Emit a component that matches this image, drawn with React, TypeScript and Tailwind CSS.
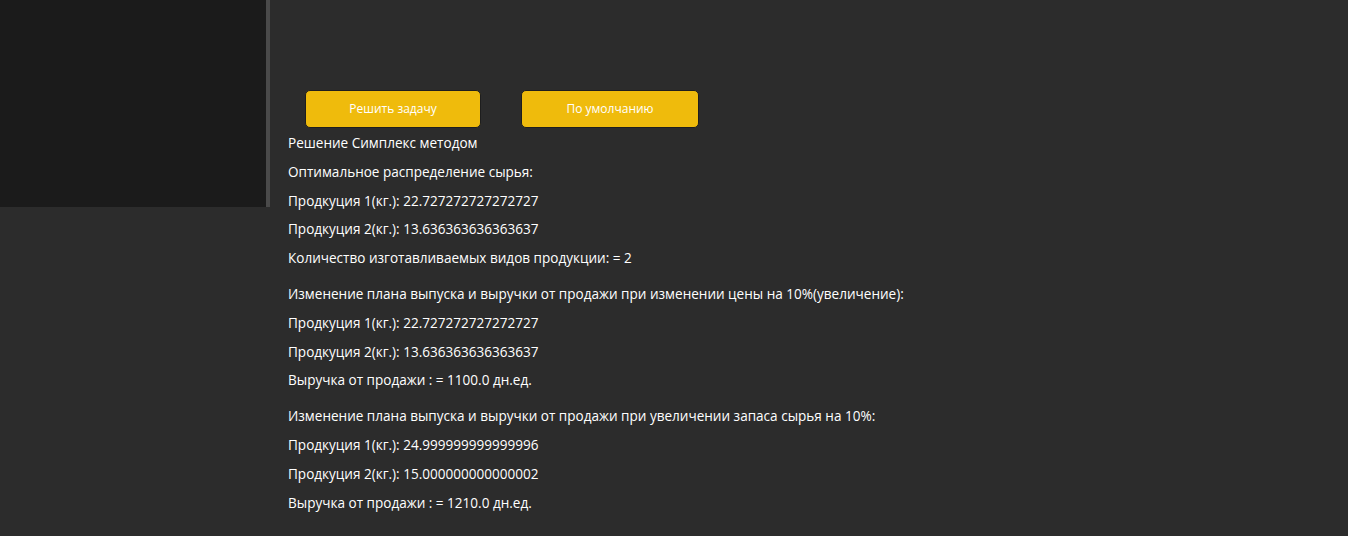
export default function App() {
  const lines1 = [
    "Решение Симплекс методом",
    "Оптимальное распределение сырья:",
    "Продкуция 1(кг.): 22.727272727272727",
    "Продкуция 2(кг.): 13.636363636363637",
    "Количество изготавливаемых видов продукции: = 2",
  ];
  const lines2 = [
    "Изменение плана выпуска и выручки от продажи при изменении цены на 10%(увеличение):",
    "Продкуция 1(кг.): 22.727272727272727",
    "Продкуция 2(кг.): 13.636363636363637",
    "Выручка от продажи : = 1100.0 дн.ед.",
  ];
  const lines3 = [
    "Изменение плана выпуска и выручки от продажи при увеличении запаса сырья на 10%:",
    "Продкуция 1(кг.): 24.999999999999996",
    "Продкуция 2(кг.): 15.000000000000002",
    "Выручка от продажи : = 1210.0 дн.ед.",
  ];

  return (
    <div className="flex min-h-[536px] w-full bg-[#2c2c2c] font-['Open_Sans',sans-serif] text-[13.55px] text-white">
      <div className="flex h-[207px] shrink-0">
        <div className="w-[266px] bg-[#1b1b1b]" />
        <div className="w-[4px] bg-[#4a4a4a]" />
      </div>

      <div className="flex flex-col pl-[18px] pt-[90px]">
        <div className="flex gap-[40px] pl-[17px]">
          <button className="h-[38px] w-[176px] rounded-[5px] border border-[#1e1e1e] bg-[#efbb0c] text-[12px] text-white">
            Решить задачу
          </button>
          <button className="h-[38px] w-[178px] rounded-[5px] border border-[#1e1e1e] bg-[#efbb0c] text-[12px] text-white">
            По умолчанию
          </button>
        </div>

        <div className="flex flex-col pt-[5px]">
          {lines1.map((t, i) => (
            <p key={i} className="h-[28.8px] leading-[20px]">{t}</p>
          ))}
        </div>
        <div className="flex flex-col pt-[7px]">
          {lines2.map((t, i) => (
            <p key={i} className="h-[28.8px] leading-[20px]">{t}</p>
          ))}
        </div>
        <div className="flex flex-col pt-[7px]">
          {lines3.map((t, i) => (
            <p key={i} className="h-[28.8px] leading-[20px]">{t}</p>
          ))}
        </div>
      </div>
    </div>
  );
}
